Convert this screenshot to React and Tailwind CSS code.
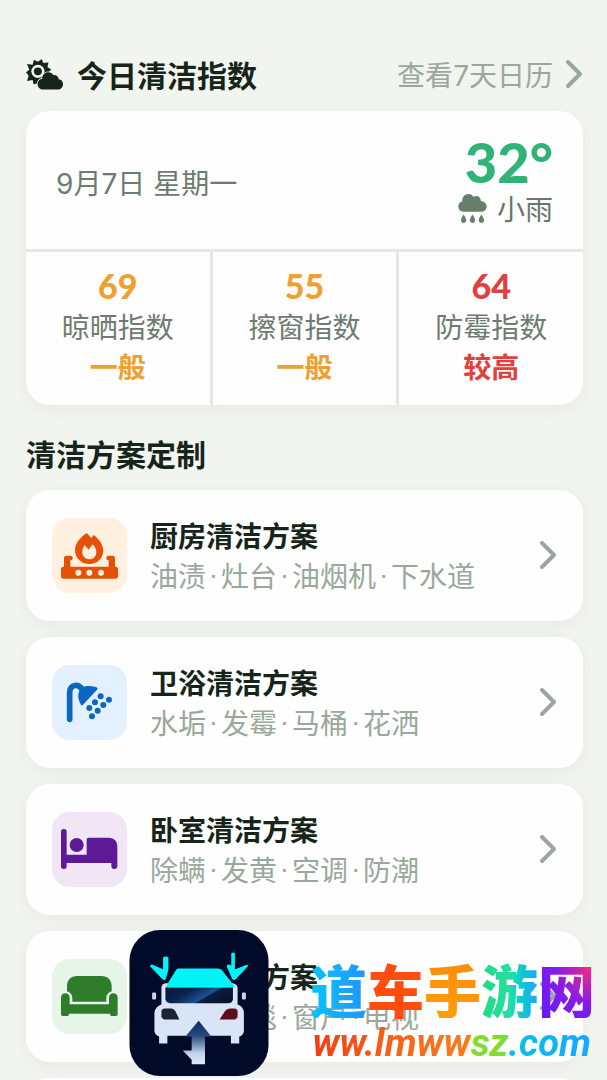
import React from 'react'

const SunCloudIcon = () => (
  <svg viewBox="0 0 112 93" className="h-[31px] w-[37px]" aria-hidden="true">
    <path
      fill="#16241a"
      d="M24 2 L35 8 L48 0 L52 12 L68 10 L65 24 L76 31 L66 42 L60 66 L40 72 L23 76 L20 63 L3 66 L8 50 L0 40 L10 32 L3 15 L20 17 Z"
    />
    <circle cx="36" cy="37" r="20" fill="#f1f4ef" />
    <circle cx="36" cy="37" r="12" fill="#16241a" />
    <path
      fill="#16241a"
      stroke="#f1f4ef"
      strokeWidth="5"
      paintOrder="stroke"
      d="M52 92 C42 92 35 84 35 75 C35 66 42 60 49 59 C49 48 57 40 67 40 C75 40 80 44 83 49 C90 46 98 52 99 61 C107 62 112 68 112 76 C112 85 105 92 96 92 Z"
    />
  </svg>
)

const RainIcon = () => (
  <svg viewBox="0 0 86 88" className="h-[29px] w-[29px]" fill="#677f69" aria-hidden="true">
    <path d="M17 54 C7 54 0 47 0 38 C0 30 5 24 12 23 C11 10 19 0 31 0 C38 0 43 4 46 9 C55 2 68 8 68 21 C78 22 86 29 86 38 C86 47 79 54 69 54 Z" />
    <path d="M16 62 C21 70 24 75 24 80 C24 85 20 88 16 88 C12 88 8 85 8 80 C8 75 11 70 16 62 Z" />
    <path d="M43 62 C48 70 51 75 51 80 C51 85 47 88 43 88 C39 88 35 85 35 80 C35 75 38 70 43 62 Z" />
    <path d="M70 62 C75 70 78 75 78 80 C78 85 74 88 70 88 C66 88 62 85 62 80 C62 75 65 70 70 62 Z" />
  </svg>
)

const Chevron = () => (
  <svg viewBox="0 0 18 30" className="h-[30px] w-[18px] shrink-0" aria-hidden="true">
    <path d="M3 3 L15 15 L3 27" fill="none" stroke="#9ba69c" strokeWidth="4" strokeLinecap="round" strokeLinejoin="round" />
  </svg>
)

const StoveIcon = () => (
  <svg viewBox="0 0 225 225" className="h-full w-full" aria-hidden="true">
    <path
      fill="#e8500a"
      d="M103 46 C109 49 113 54 117 60 L126 51 C141 64 154 81 154 98 C154 121 135 138 112 138 C88 138 69 121 69 97 C69 77 83 60 103 46 Z"
    />
    <path fill="#fff0e0" d="M98 82 L110 95 L122 79 C129 86 133 94 133 102 C133 115 124 124 112 124 C100 124 91 115 91 103 C91 95 93 88 98 82 Z" />
    <path
      fill="#e8500a"
      d="M34 146 H36 V121 C36 116 39 113 43 113 H55 C60 113 62 116 62 120 C62 124 60 127 55 127 V146 H170 V127 C165 127 163 124 163 120 C163 116 165 113 170 113 H182 C186 113 189 116 189 121 V146 H191 C196 146 198 149 198 153 V175 C198 180 195 182 191 182 H34 C30 182 27 180 27 175 V153 C27 149 30 146 34 146 Z"
    />
    <circle cx="79" cy="164" r="9" fill="#fff0e0" />
    <circle cx="112" cy="164" r="9" fill="#fff0e0" />
    <circle cx="147" cy="164" r="9" fill="#fff0e0" />
  </svg>
)

const ShowerIcon = () => (
  <svg viewBox="0 0 225 225" className="h-full w-full" fill="#0b66c3" aria-hidden="true">
    <path d="M53 163 V83 C53 57 82 54 90 74" fill="none" stroke="#0b66c3" strokeWidth="17" strokeLinecap="round" />
    <path d="M87 119 C78 104 74 82 88 71 C101 59 117 64 131 66 C137 67 138 71 135 74 L93 119 C91 122 89 122 87 119 Z" />
    <circle cx="146" cy="94" r="9" />
    <circle cx="171" cy="104" r="9" />
    <circle cx="129" cy="112" r="9" />
    <circle cx="154" cy="120" r="9" />
    <circle cx="112" cy="129" r="9" />
    <circle cx="137" cy="137" r="9" />
    <circle cx="120" cy="154" r="9" />
  </svg>
)

const BedIcon = () => (
  <svg viewBox="0 0 225 225" className="h-full w-full" fill="#5e1a96" aria-hidden="true">
    <rect x="27" y="51" width="17" height="120" rx="8" />
    <circle cx="74" cy="99" r="21" />
    <path d="M36 128 H104 V83 C104 79 106 77 110 77 H170 C187 77 196 88 196 103 V162 C196 168 193 171 187 171 C181 171 178 168 178 162 V153 H36 Z" />
  </svg>
)

const SofaIcon = () => (
  <svg viewBox="0 0 225 225" className="h-full w-full" fill="#2f7d2b" aria-hidden="true">
    <path d="M45 97 V82 C45 63 57 51 75 51 H149 C167 51 179 63 179 82 V97 C170 100 163 107 163 116 V128 H61 V116 C61 107 54 100 45 97 Z" />
    <path d="M27 116 C27 108 32 103 40 103 C48 103 53 108 53 116 V136 H171 V116 C171 108 176 103 184 103 C192 103 197 108 197 116 V164 C197 169 195 171 190 171 H181 C176 171 174 169 174 164 H51 C51 169 49 171 44 171 H34 C29 171 27 169 27 164 Z" />
  </svg>
)

const CarLogo = () => (
  <svg viewBox="0 0 418 439" className="h-[146px] w-[140px]" aria-hidden="true">
    <defs>
      <linearGradient id="glass" x1="0" y1="0" x2="1" y2="0.4">
        <stop offset="0" stopColor="#071536" />
        <stop offset="0.4" stopColor="#0b2450" />
        <stop offset="0.7" stopColor="#1d5292" />
        <stop offset="0.75" stopColor="#0b1d45" />
        <stop offset="1" stopColor="#08132f" />
      </linearGradient>
      <linearGradient id="arrow" x1="0" y1="0" x2="0" y2="1">
        <stop offset="0" stopColor="#0a2b62" />
        <stop offset="0.35" stopColor="#2c4a80" />
        <stop offset="0.75" stopColor="#c4d2ee" />
        <stop offset="1" stopColor="#dfe8fa" />
      </linearGradient>
    </defs>
    <rect width="418" height="439" rx="92" fill="#020a29" />
    <rect x="68" y="188" width="12" height="21" rx="4" fill="#c9d5ee" />
    <rect x="338" y="188" width="12" height="21" rx="4" fill="#c9d5ee" />
    <path
      fill="#d9e4f7"
      d="M96 172 Q98 162 108 160 H310 Q322 162 325 172 V224 Q343 230 344 248 V305 Q340 318 330 320 V341 H305 V318 H114 V341 H89 V320 Q78 317 75 305 V248 Q78 230 96 224 Z"
    />
    <path fill="#02f4fb" d="M148 116 H266 Q274 116 279 122 L318 172 H108 L138 123 Q142 116 148 116 Z" />
    <path fill="url(#glass)" d="M108 173 H311 V209 Q309 220 297 220 H122 Q110 218 108 209 Z" />
    <path fill="#1a2434" d="M96 243 Q98 236 106 236 H126 Q134 237 138 244 L150 269 H104 Q96 267 96 259 Z" />
    <path fill="#5c101e" d="M325 243 Q323 236 315 236 H302 Q292 237 287 244 L271 269 H317 Q325 267 325 259 Z" />
    <path fill="url(#arrow)" d="M208 273 L246 320 H227 V404 H187 V390 L160 362 H187 V320 H168 Z" />
    <path fill="#02f4fb" d="M101 82 Q109 78 117 82 V119 L109 149 Q103 152 97 146 L62 109 Q61 104 68 104 L101 118 Z" />
    <path fill="#02f4fb" d="M306 70 Q312 65 317 70 V119 L350 105 Q358 104 356 109 L319 149 Q314 152 309 147 L293 111 Q292 103 298 104 L306 107 Z" />
  </svg>
)

const indexes = [
  { name: '晾晒指数', value: 69, level: '一般', color: 'text-[#efa02f]' },
  { name: '擦窗指数', value: 55, level: '一般', color: 'text-[#efa02f]' },
  { name: '防霉指数', value: 64, level: '较高', color: 'text-[#e04040]' },
]

const plans = [
  { title: '厨房清洁方案', tags: ['油渍', '灶台', '油烟机', '下水道'], icon: StoveIcon, tile: 'bg-[#fff0e0]' },
  { title: '卫浴清洁方案', tags: ['水垢', '发霉', '马桶', '花洒'], icon: ShowerIcon, tile: 'bg-[#e3f0ff]' },
  { title: '卧室清洁方案', tags: ['除螨', '发黄', '空调', '防潮'], icon: BedIcon, tile: 'bg-[#f0e6f6]' },
  { title: '客厅清洁方案', tags: ['沙发', '地毯', '窗户', '电视'], icon: SofaIcon, tile: 'bg-[#e7f5e9]' },
]

// Digits and spaces inside Chinese text
const Latin = ({ children }) => (
  <span className="font-[Inter,sans-serif] leading-none whitespace-pre">{children}</span>
)

const PlanCard = ({ title, tags, icon: Icon, tile }) => (
  <a href="#" className="flex items-center rounded-3xl bg-[#fdfefd] px-[26px] pt-[25px] pb-[26px] shadow-[0_4px_16px_rgba(60,80,60,0.06)]">
    <div className={`h-[75px] w-[75px] shrink-0 overflow-hidden rounded-[18px] ${tile}`}>
      <Icon />
    </div>
    <div className="ml-[23px] min-w-0 flex-1 text-[28px] leading-[40px] whitespace-nowrap">
      <h3 className="font-bold text-[#16241a]">{title}</h3>
      <p className="flex text-[#9aa89c]">
        {tags.map((tag, i) => (
          <React.Fragment key={tag}>
            {i > 0 && <span className="w-[15px] text-center font-['Liberation_Sans',sans-serif]">·</span>}
            <span>{tag}</span>
          </React.Fragment>
        ))}
      </p>
    </div>
    <Chevron />
  </a>
)

const App = () => {
  return (
    <div className="relative h-screen overflow-hidden bg-[#f1f4ef] font-['Noto_Sans_CJK_SC',sans-serif]">
      <main className="pt-[54px] pr-6 pl-[26px]">
        {/* Today's cleaning index */}
        <header className="flex items-center justify-between leading-[40px]">
          <div className="flex items-center gap-[14px]">
            <SunCloudIcon />
            <h1 className="text-[30px] font-bold text-[#16241a]">今日清洁指数</h1>
          </div>
          <a href="#" className="flex items-center gap-3 text-[28px] text-[#9aa89c]">
            <span>查看<Latin>7</Latin>天日历</span>
            <Chevron />
          </a>
        </header>

        <section className="mt-[17px] overflow-hidden rounded-3xl bg-[#fdfefd] shadow-[0_4px_16px_rgba(60,80,60,0.06)]">
          <div className="flex items-center justify-between px-[30px] pt-[25px] pb-[21px]">
            <p className="text-[28px] leading-[40px] text-[#6d7b70]">
              <Latin>9</Latin>月<Latin>7</Latin>日<Latin> </Latin>星期一
            </p>
            <div className="flex flex-col items-end">
              <p className="font-[Lato] text-[56px] leading-[52px] font-black text-[#2fb377]">32°</p>
              <p className="flex items-center gap-2.5 text-[28px] leading-[40px] text-[#69776c]">
                <RainIcon />
                小雨
              </p>
            </div>
          </div>
          <div className="grid grid-cols-3 gap-[3px] bg-[#e2e9e3] pt-[3px]">
            {indexes.map((item) => (
              <div key={item.name} className="bg-[#fdfefd] pt-[14px] pb-[19px] text-center text-[28px] leading-[40px]">
                <p className={`font-[Lato] text-[34px] font-black ${item.color}`}>{item.value}</p>
                <p className="text-[#6d7b70]">{item.name}</p>
                <p className={`font-bold ${item.color}`}>{item.level}</p>
              </div>
            ))}
          </div>
        </section>

        {/* Cleaning plans */}
        <h2 className="mt-7 text-[30px] leading-[40px] font-bold text-[#16241a]">清洁方案定制</h2>
        <div className="mt-[17px] flex flex-col gap-4">
          {plans.map((plan) => (
            <PlanCard key={plan.title} {...plan} />
          ))}
          <div className="h-32 rounded-3xl bg-[#fdfefd]" />
        </div>
      </main>

      {/* Site badge over the list */}
      <div className="absolute bottom-1 left-[129px]">
        <CarLogo />
      </div>
      <div className="absolute right-3 bottom-3 flex flex-col items-end whitespace-nowrap">
        <p className="flex text-[57px] leading-[60px] font-black">
          <span className="bg-linear-to-r from-[#05c4ff] to-[#2094fa] bg-clip-text text-transparent">道</span>
          <span className="text-[#ff4d0d]">车</span>
          <span className="bg-linear-to-b from-[#ff8a10] to-[#ff9f00] bg-clip-text text-transparent">手</span>
          <span className="bg-linear-to-r from-[#1fdc7c] via-[#22dfa4] to-[#1fa5ff] bg-clip-text text-transparent">游</span>
          <span className="bg-[radial-gradient(circle_at_90%_20%,#f02a86,#8a1be8_45%,#5a1cff)] bg-clip-text text-transparent">网</span>
        </p>
        <p className="font-[Roboto,sans-serif] text-[38px] leading-[50px] font-bold italic">
          <span className="bg-linear-to-r from-[#f53b14] to-[#fb7d1c] bg-clip-text text-transparent">ww.lmww</span>
          <span className="text-[#7fdc33]">sz</span>
          <span className="bg-linear-to-r from-[#0cc0e8] to-[#16a8ff] bg-clip-text pr-1 text-transparent">.com</span>
        </p>
      </div>
    </div>
  )
}

export default App
